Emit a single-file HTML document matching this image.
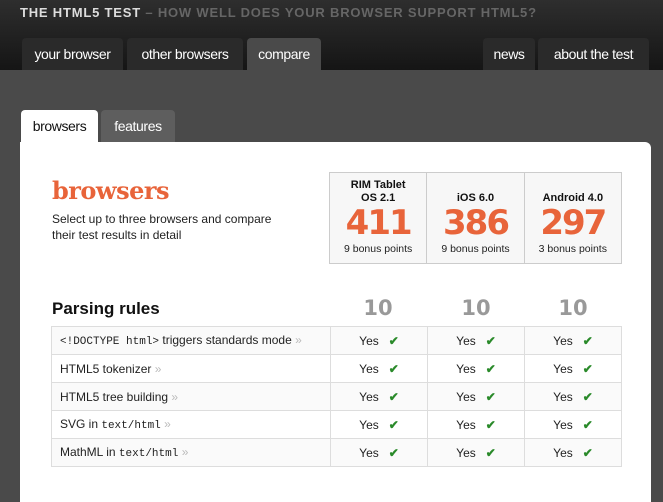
<!DOCTYPE html>
<html><head><style>
*{margin:0;padding:0;box-sizing:border-box}
body{width:663px;height:488px;overflow:hidden;background:#4a4a4a;font-family:"Liberation Sans",sans-serif;position:relative}
#hd{position:absolute;left:0;top:0;width:663px;height:70px;background:linear-gradient(#2e2e2e,#151515)}
#title{position:absolute;left:20px;top:5px;font-size:13px;font-weight:bold;letter-spacing:0.8px;color:#ddd}
#title span{color:#666}
.tab{position:absolute;top:38px;height:32px;background:#2a2a2a;color:#fff;font-size:14px;line-height:32px;text-align:center;border-radius:4px 4px 0 0;letter-spacing:-0.4px}
.sub{position:absolute;top:110px;height:32px;font-size:14px;line-height:32px;text-align:center;border-radius:4px 4px 0 0;letter-spacing:-0.4px}
#panel{position:absolute;left:20px;top:142px;width:631px;height:360px;background:#fff;border-radius:0 6px 0 0}
h1{position:absolute;left:52px;top:176px;font-family:"DejaVu Serif",serif;font-weight:bold;font-size:24px;color:#e8643a;letter-spacing:-0.5px}
#desc{position:absolute;left:52px;top:211px;font-size:12px;line-height:16px;color:#222}
#scores{position:absolute;left:329px;top:172px;width:293px;height:92px;border:1px solid #ccc;background:#f7f7f7;display:flex}
#scores>div{flex:1;border-right:1px solid #ccc;text-align:center;position:relative}
#scores>div:last-child{border-right:0}
.nm{position:absolute;left:0;right:0;bottom:58px;font-size:11px;font-weight:bold;line-height:13px;color:#111;display:block}
.sc{position:absolute;left:0;right:0;top:32px;font-family:"DejaVu Sans",sans-serif;font-weight:bold;font-size:34px;line-height:36px;color:#e8643a;letter-spacing:-2px;display:block}
.bp{position:absolute;left:0;right:0;top:70px;font-size:10.5px;color:#222;display:block}
h2{position:absolute;left:52px;top:299px;font-size:17px;font-weight:bold;color:#111}
.ten{position:absolute;top:296px;width:98px;text-align:center;font-family:"DejaVu Sans",sans-serif;font-weight:bold;font-size:21px;color:#999}
table{position:absolute;left:51px;top:326px;border-collapse:collapse;table-layout:fixed;width:571px}
td{border:1px solid #ddd;height:28px;font-size:12px;color:#222;white-space:nowrap;overflow:hidden}
td.l{width:279px;padding-left:8px}
td.c{width:97px;text-align:center}
tr:nth-child(odd) td{background:#fafafa}
code{font-family:"Liberation Mono",monospace;font-size:11px}
.r{color:#bbb}
.ck{color:#2a8a2a;font-weight:bold;margin-left:10px}
</style></head><body>
<div id="hd"><div id="title">THE HTML5 TEST <span>– HOW WELL DOES YOUR BROWSER SUPPORT HTML5?</span></div></div>
<div class="tab" style="left:22px;width:101px">your browser</div>
<div class="tab" style="left:127px;width:116px">other browsers</div>
<div class="tab" style="left:247px;width:74px;background:#4a4a4a">compare</div>
<div class="tab" style="left:483px;width:52px">news</div>
<div class="tab" style="left:538px;width:111px">about the test</div>
<div class="sub" style="left:21px;width:77px;background:#fff;color:#111">browsers</div>
<div class="sub" style="left:101px;width:74px;background:#5e5e5e;color:#fff">features</div>
<div id="panel"></div>
<h1>browsers</h1>
<div id="desc">Select up to three browsers and compare<br>their test results in detail</div>
<div id="scores">
<div><span class="nm">RIM Tablet<br>OS 2.1</span><span class="sc">411</span><span class="bp">9 bonus points</span></div>
<div><span class="nm">iOS 6.0</span><span class="sc">386</span><span class="bp">9 bonus points</span></div>
<div><span class="nm">Android 4.0</span><span class="sc">297</span><span class="bp">3 bonus points</span></div>
</div>
<h2>Parsing rules</h2>
<div class="ten" style="left:329px">10</div>
<div class="ten" style="left:427px">10</div>
<div class="ten" style="left:524px">10</div>
<table>
<tr><td class="l"><code>&lt;!DOCTYPE html&gt;</code> triggers standards mode <span class="r">»</span></td><td class="c">Yes<span class="ck">✔</span></td><td class="c">Yes<span class="ck">✔</span></td><td class="c">Yes<span class="ck">✔</span></td></tr>
<tr><td class="l">HTML5 tokenizer <span class="r">»</span></td><td class="c">Yes<span class="ck">✔</span></td><td class="c">Yes<span class="ck">✔</span></td><td class="c">Yes<span class="ck">✔</span></td></tr>
<tr><td class="l">HTML5 tree building <span class="r">»</span></td><td class="c">Yes<span class="ck">✔</span></td><td class="c">Yes<span class="ck">✔</span></td><td class="c">Yes<span class="ck">✔</span></td></tr>
<tr><td class="l">SVG in <code>text/html</code> <span class="r">»</span></td><td class="c">Yes<span class="ck">✔</span></td><td class="c">Yes<span class="ck">✔</span></td><td class="c">Yes<span class="ck">✔</span></td></tr>
<tr><td class="l">MathML in <code>text/html</code> <span class="r">»</span></td><td class="c">Yes<span class="ck">✔</span></td><td class="c">Yes<span class="ck">✔</span></td><td class="c">Yes<span class="ck">✔</span></td></tr>
</table>
</body></html>
